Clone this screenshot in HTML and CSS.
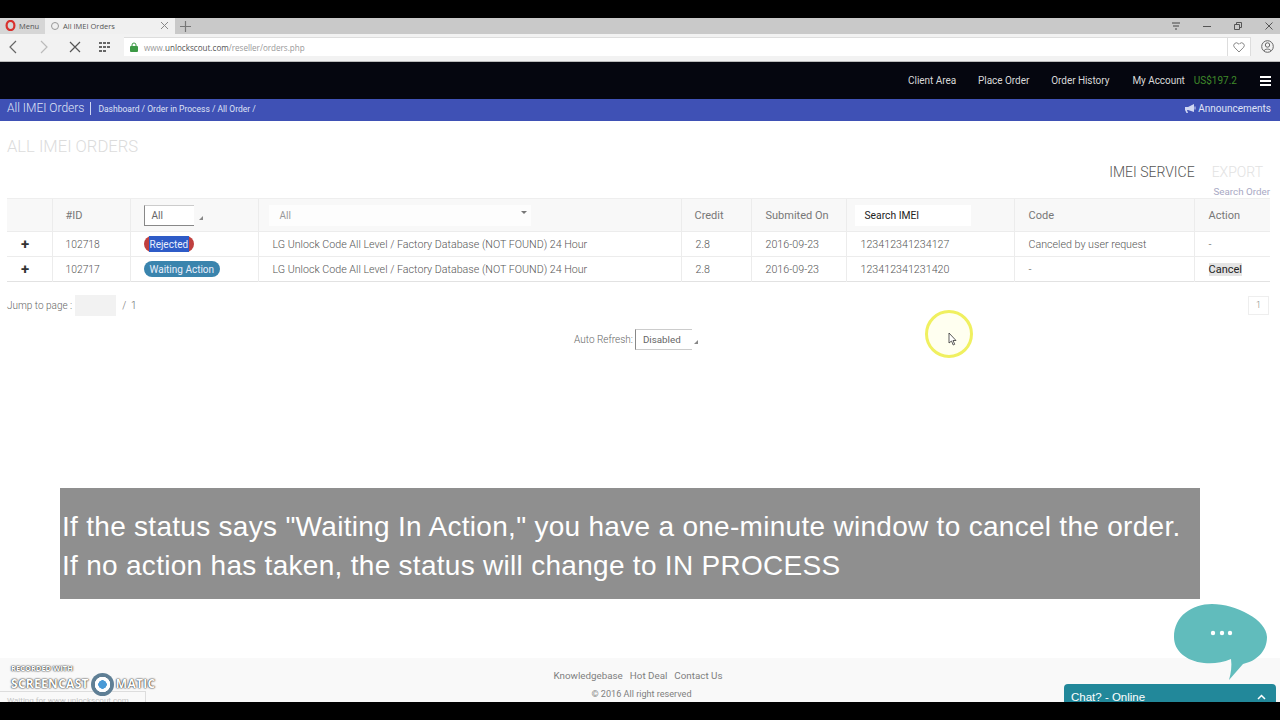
FILE: index.html
```html
<!DOCTYPE html>
<html lang="en">
<head>
    <meta charset="UTF-8">
    <title>All IMEI Orders</title>
    <link rel="stylesheet" href="styles.css">
</head>
<body>
    <div class="letterbox-top"></div>

    <div class="tabbar">
        <div class="menu-btn">
            <svg class="opera" width="11" height="11" viewBox="0 0 11 11"><ellipse cx="5.5" cy="5.5" rx="3.9" ry="4.6" fill="none" stroke="#d9322e" stroke-width="2.2"/></svg>
            <span>Menu</span>
        </div>
        <div class="tab">
            <span class="spinner"></span>
            <span class="tab-title">All IMEI Orders</span>
            <svg width="9" height="9" viewBox="0 0 9 9"><path d="M1 1l7 7M8 1L1 8" stroke="#888" stroke-width="1"/></svg>
        </div>
        <svg class="new-tab" width="11" height="11" viewBox="0 0 11 11"><path d="M5.5 0v11M0 5.5h11" stroke="#777" stroke-width="1.2"/></svg>
        <div class="win-btns">
            <svg width="10" height="10" viewBox="0 0 10 10"><path d="M1 2h8M2 5h6M4 8h2" stroke="#444" stroke-width="1"/></svg>
            <svg width="10" height="10" viewBox="0 0 10 10"><path d="M1 5.5h8" stroke="#555" stroke-width="1"/></svg>
            <svg width="10" height="10" viewBox="0 0 10 10"><path d="M1.5 3.5h5v5h-5zM3.5 3.5v-2h5v5h-2" fill="none" stroke="#555" stroke-width="1"/></svg>
            <svg width="10" height="10" viewBox="0 0 10 10"><path d="M1.5 1.5l7 7M8.5 1.5l-7 7" stroke="#555" stroke-width="1"/></svg>
        </div>
    </div>

    <div class="addressbar">
        <svg width="10" height="14" viewBox="0 0 10 14"><path d="M8 1L2 7l6 6" fill="none" stroke="#666" stroke-width="1.2"/></svg>
        <svg class="dim" width="10" height="14" viewBox="0 0 10 14"><path d="M2 1l6 6-6 6" fill="none" stroke="#bbb" stroke-width="1.2"/></svg>
        <svg width="12" height="12" viewBox="0 0 12 12"><path d="M1 1l10 10M11 1L1 11" stroke="#555" stroke-width="1.2"/></svg>
        <svg width="13" height="12" viewBox="0 0 13 12"><path d="M1 1h3v2H1zM5 1h3v2H5zM9 1h3v2H9zM1 5h3v2H1zM5 5h3v2H5zM9 5h3v2H9zM1 9h3v2H1zM5 9h3v2H5z" fill="#666"/></svg>
        <div class="urlbox">
            <svg width="8" height="10" viewBox="0 0 8 10"><path d="M2 4V3a2 2 0 0 1 4 0v1" fill="none" stroke="#3d9a46"/><rect y="4" width="8" height="6" rx="1" fill="#3d9a46"/></svg>
            <span class="url">www.<b>unlockscout.com</b>/reseller/orders.php</span>
            <div class="heart">
                <svg width="12" height="11" viewBox="0 0 12 11"><path d="M6 10L1.3 5.2a2.7 2.7 0 0 1 3.9-3.7L6 2.300l.8-.8a2.700 2.700 0 0 1 3.900 3.700z" fill="none" stroke="#888"/></svg>
            </div>
        </div>
        <svg class="user" width="13" height="13" viewBox="0 0 13 13"><circle cx="6.500" cy="6.500" r="5.800" fill="none" stroke="#666"/><circle cx="6.500" cy="5" r="2.200" fill="none" stroke="#666"/><path d="M3 11c.5-2.500 6.500-2.500 7 0" fill="none" stroke="#666"/></svg>
    </div>

    <nav class="navbar">
        <a>Client Area</a>
        <a>Place Order</a>
        <a>Order History</a>
        <a>My Account</a>
        <span class="balance">US$197.2</span>
        <div class="burger"><i></i><i></i><i></i></div>
    </nav>

    <div class="crumbbar">
        <span class="crumb-title">All IMEI Orders</span>
        <span class="crumb-path">Dashboard / Order in Process / All Order /</span>
        <span class="announce">
            <svg width="11" height="9" viewBox="0 0 11 9"><path d="M0 3h3l6-3v8L3 6H2l1 3H1.500L0 6z" fill="#cfd6f2"/><path d="M10 2.500v3" stroke="#cfd6f2"/></svg>
            Announcements
        </span>
    </div>

    <main class="content">
        <h1>ALL IMEI ORDERS</h1>
        <div class="tools">
            <span class="tool-service">IMEI SERVICE</span>
            <span class="tool-export">EXPORT</span>
        </div>
        <div class="search-order">Search Order</div>

        <table class="orders">
            <colgroup>
                <col class="c-plus"><col class="c-id"><col class="c-status"><col class="c-service">
                <col class="c-credit"><col class="c-date"><col class="c-imei"><col class="c-code"><col class="c-action">
            </colgroup>
            <thead>
                <tr>
                    <th></th>
                    <th>#ID</th>
                    <th><div class="select">All<span class="arrow"></span></div></th>
                    <th><div class="service-select">All<span class="caret"></span></div></th>
                    <th>Credit</th>
                    <th>Submited On</th>
                    <th><div class="imei-search">Search IMEI</div></th>
                    <th>Code</th>
                    <th>Action</th>
                </tr>
            </thead>
            <tbody>
                <tr>
                    <td class="plus">+</td>
                    <td>102718</td>
                    <td><span class="badge rejected"><span>Rejected</span></span></td>
                    <td>LG Unlock Code All Level / Factory Database (NOT FOUND) 24 Hour</td>
                    <td>2.8</td>
                    <td>2016-09-23</td>
                    <td>123412341234127</td>
                    <td>Canceled by user request</td>
                    <td>-</td>
                </tr>
                <tr>
                    <td class="plus">+</td>
                    <td>102717</td>
                    <td><span class="badge waiting">Waiting Action</span></td>
                    <td>LG Unlock Code All Level / Factory Database (NOT FOUND) 24 Hour</td>
                    <td>2.8</td>
                    <td>2016-09-23</td>
                    <td>123412341231420</td>
                    <td>-</td>
                    <td><span class="cancel">Cancel</span></td>
                </tr>
            </tbody>
        </table>

        <div class="pager">
            <span>Jump to page :</span>
            <span class="page-input"></span>
            <span>/ &nbsp;1</span>
            <span class="page-num">1</span>
        </div>

        <div class="refresh">
            <span>Auto Refresh:</span>
            <div class="select refresh-select">Disabled<span class="arrow"></span></div>
        </div>
    </main>

    <footer class="footer">
        <div class="foot-links"><a>Knowledgebase</a><a>Hot Deal</a><a>Contact Us</a></div>
        <div class="copy">© 2016 All right reserved</div>
    </footer>

    <div class="letterbox-bottom"></div>

    <!-- things lying on top of the recording -->
    <div class="caption">If the status says "Waiting In Action," you have a one-minute window to cancel the order.<br>If no action has taken, the status will change to IN PROCESS</div>

    <div class="cursor-ring">
        <svg width="9" height="14" viewBox="0 0 9 14"><path d="M1 1v10l2.500-2 1.700 4 1.500-.7-1.700-3.800H8z" fill="#fff" stroke="#333" stroke-width=".8"/></svg>
    </div>

    <svg class="chat-bubble" width="94" height="76" viewBox="0 0 94 76">
        <path d="M0 33C0 12 18 0 38 0c24 0 55 16 55 33 0 15-11 24-24 27L55 76c2-7 3-14 2-21-9 4-19 5-27 4C12 57 0 47 0 33z" fill="#61bcbc"/>
        <circle cx="39" cy="29" r="2.200" fill="#fff"/><circle cx="48" cy="29" r="2.200" fill="#fff"/><circle cx="56" cy="29" r="2.200" fill="#fff"/>
    </svg>
    <div class="chat-tab">
        <span>Chat? - Online</span>
        <svg width="9" height="6" viewBox="0 0 9 6"><path d="M1 5l3.500-3.500L8 5" fill="none" stroke="#fff" stroke-width="1.500"/></svg>
    </div>

    <div class="status-tip">Waiting for www.unlockscout.com...</div>
    <div class="watermark">
        <div class="wm-small">RECORDED WITH</div>
        <div class="wm-big">SCREENCAST<span class="wm-dot"></span>MATIC</div>
    </div>
</body>
</html>
```

FILE: styles.css
```css
html, body {
    margin: 0;
    padding: 0;
    height: 100%;
    overflow: hidden;
}
body {
    position: relative;
    display: flex;
    flex-direction: column;
    width: 1280px;
    height: 720px;
    background-color: #fff;
    font-family: Roboto, "Liberation Sans", sans-serif;
    font-size: 10.500px;
    color: #666;
}
svg {
    display: block;
    flex: none;
}
.letterbox-top {
    height: 18px;
    background-color: #000;
}
.letterbox-bottom {
    height: 18px;
    background-color: #000;
}

/* browser chrome */
.tabbar {
    display: flex;
    align-items: center;
    height: 16px;
    background-color: #c9c9c9;
    flex: none;
}
.menu-btn {
    display: flex;
    align-items: center;
    gap: 3px;
    width: 45px;
    height: 16px;
    padding: 0 0 1px 5px;
    box-sizing: border-box;
    background-color: #d6d6d6;
    font-family: "Open Sans", sans-serif;
    font-size: 7.500px;
    color: #555;
}
.tab {
    display: flex;
    align-items: center;
    width: 130px;
    height: 16px;
    padding: 0 6px 1px 6px;
    box-sizing: border-box;
    background-color: #f0f0f0;
    font-family: "Open Sans", sans-serif;
    font-size: 7.500px;
    color: #555;
}
.spinner {
    width: 6px;
    height: 6px;
    border: 1.500px solid #999;
    border-radius: 50%;
    margin-right: 4px;
}
.tab-title {
    flex: 1;
}
.new-tab {
    margin-left: 5px;
}
.win-btns {
    display: flex;
    gap: 21px;
    margin-left: auto;
    padding-right: 6px;
    align-items: center;
}
.addressbar {
    display: flex;
    align-items: center;
    height: 28px;
    padding: 0 6px 2px 8px;
    box-sizing: border-box;
    background-color: #f2f2f2;
    border-bottom: 1px solid #bbb;
    flex: none;
}
.addressbar > svg:nth-child(2) {
    margin-left: 21px;
}
.addressbar > svg:nth-child(3) {
    margin-left: 20px;
}
.addressbar > svg:nth-child(4) {
    margin-left: 17px;
}
.urlbox {
    display: flex;
    align-items: center;
    gap: 6px;
    flex: 1;
    height: 19px;
    margin-left: 13px;
    padding-left: 6px;
    background-color: #fff;
    border-top: 1px solid #ddd;
    box-sizing: border-box;
}
.url {
    flex: 1;
    font-family: "Open Sans", sans-serif;
    font-size: 8.100px;
    color: #999;
}
.url b {
    font-weight: 400;
    color: #555;
}
.heart {
    display: flex;
    align-items: center;
    justify-content: center;
    width: 22px;
    height: 18px;
    border-left: 1px solid #ddd;
    border-right: 1px solid #ddd;
}
.user {
    margin-left: 10px;
}

/* site header */
.navbar {
    display: flex;
    align-items: center;
    height: 37px;
    padding-right: 9px;
    background-color: #05060f;
    color: #d8d8d8;
    flex: none;
}
.navbar a:first-child {
    margin-left: auto;
}
.navbar a {
    margin-right: 22px;
    font-size: 10px;
    letter-spacing: -.05px;
}
.navbar a:nth-child(3) {
    margin-right: 23px;
}
.navbar a:nth-child(4) {
    margin-right: 9px;
}
.balance {
    color: #3f8a2a;
    font-size: 10px;
    margin-right: 23px;
}
.burger {
    display: flex;
    flex-direction: column;
    gap: 2px;
}
.burger i {
    display: block;
    width: 11px;
    height: 2px;
    background-color: #fff;
}
.crumbbar {
    display: flex;
    align-items: center;
    height: 22px;
    padding: 0 9px 3px 7px;
    box-sizing: border-box;
    background-color: #3f51b5;
    color: #dfe3f6;
    flex: none;
}
.crumb-title {
    font-size: 12px;
    font-weight: 300;
    padding-right: 6px;
    border-right: 1px solid #cfd6f2;
    line-height: 13px;
}
.crumb-path {
    margin-left: 7px;
    font-size: 8.500px;
}
.announce {
    display: flex;
    align-items: center;
    gap: 2px;
    margin-left: auto;
    font-size: 10px;
}

/* orders page */
.content {
    flex: 1;
    padding: 17px 10px 0 7px;
    min-height: 0;
}
h1 {
    margin: 0;
    font-size: 16.600px;
    line-height: 18px;
    font-weight: 300;
    color: #dcdcdc;
}
.tools {
    display: flex;
    justify-content: flex-end;
    align-items: center;
    gap: 17px;
    height: 18px;
    margin-top: 7px;
    padding-right: 7px;
    font-size: 14px;
    font-weight: 300;
}
.tool-service {
    color: #555;
}
.tool-export {
    color: #e2e2e2;
}
.search-order {
    height: 11px;
    margin-top: 5px;
    text-align: right;
    font-size: 9.800px;
    line-height: 11px;
    color: #a9a9c4;
}
.orders {
    width: 1263px;
    margin-top: 1px;
    table-layout: fixed;
    border-collapse: collapse;
    border-bottom: 1px solid #e2e2e2;
}
.c-plus { width: 45px; }
.c-id { width: 78px; }
.c-status { width: 128px; }
.c-service { width: 423px; }
.c-credit { width: 70px; }
.c-date { width: 95px; }
.c-imei { width: 168px; }
.c-code { width: 180px; }
.c-action { width: 76px; }
.orders th, .orders td {
    padding: 0 0 0 14px;
    border-left: 1px solid #ececec;
    text-align: left;
    white-space: nowrap;
}
.orders th:first-child, .orders td:first-child {
    border-left: 0;
}
.orders th:nth-child(2), .orders td:nth-child(2), .orders th:nth-child(3), .orders td:nth-child(3), .orders th:nth-child(5) {
    padding-left: 13px;
}
.orders th {
    height: 32px;
    background-color: #f8f8f8;
    border-top: 1px solid #eee;
    font-weight: 400;
    color: #777;
    font-size: 11px;
}
.orders td {
    height: 24px;
    border-top: 1px solid #ececec;
    font-size: 10.700px;
    font-weight: 300;
    color: #555;
}
.orders td:nth-child(2) {
    font-size: 10.300px;
}
.orders td.plus {
    padding-left: 14px;
    font-size: 15px;
    font-weight: 700;
    color: #333;
}
.select {
    position: relative;
    display: flex;
    align-items: center;
    width: 50px;
    height: 21px;
    padding-left: 7px;
    box-sizing: border-box;
    background-color: #fff;
    border-left: 1px solid #888;
    border-top: 1px solid #ccc;
    border-bottom: 1px solid #888;
    font-size: 10px;
    color: #666;
}
.arrow {
    position: absolute;
    right: -9px;
    bottom: 5px;
    width: 0;
    height: 0;
    border-left: 4px solid transparent;
    border-bottom: 4px solid #888;
}
.service-select {
    position: relative;
    display: flex;
    align-items: center;
    width: 262px;
    height: 21px;
    margin-left: -4px;
    padding-left: 11px;
    box-sizing: border-box;
    background-color: #fdfdfd;
    color: #999;
    font-size: 10px;
}
.caret {
    position: absolute;
    right: 4px;
    top: 6px;
    width: 0;
    height: 0;
    border-left: 3px solid transparent;
    border-right: 3px solid transparent;
    border-top: 3px solid #777;
}
.imei-search {
    width: 116px;
    height: 21px;
    margin-left: -6px;
    padding-left: 10px;
    box-sizing: border-box;
    background-color: #fff;
    color: #222;
    font-size: 10.300px;
    line-height: 21px;
}
.badge {
    display: inline-block;
    height: 16px;
    padding: 0 6px;
    border-radius: 8px;
    color: #e8eefc;
    font-size: 10px;
    font-weight: 400;
    line-height: 17px;
    box-sizing: border-box;
    vertical-align: middle;
}
.rejected {
    background-color: #c0403f;
}
.rejected span {
    display: inline-block;
    height: 16px;
    margin: 0 -1px;
    padding: 0 1px;
    background-color: #2e5bc7;
}
.waiting {
    background-color: #3a84ad;
}
.cancel {
    background-color: #e4e4e4;
    color: #222;
    font-size: 11px;
    font-weight: 400;
}
.pager {
    display: flex;
    align-items: center;
    gap: 3px;
    height: 22px;
    margin-top: 12px;
    font-size: 10px;
    font-weight: 300;
    color: #666;
}
.page-input {
    width: 41px;
    height: 21px;
    margin-right: 3px;
    background-color: #f2f2f2;
}
.page-num {
    margin-left: auto;
    width: 21px;
    height: 19px;
    margin-right: 1px;
    border: 1px solid #eee;
    box-sizing: border-box;
    text-align: center;
    line-height: 17px;
    font-size: 9px;
    color: #888;
}
.refresh {
    display: flex;
    align-items: center;
    justify-content: center;
    gap: 2px;
    margin-top: 13px;
    padding-right: 11px;
    font-size: 10px;
    font-weight: 300;
    color: #666;
}
.refresh-select {
    width: 57px;
    font-size: 9.800px;
    font-weight: 400;
    border-top-color: #ccc;
    border-bottom-color: #ccc;
}
.refresh-select .arrow {
    right: -6px;
}
.footer {
    height: 44px;
    padding-top: 12px;
    box-sizing: border-box;
    background-color: #f9f9f9;
    text-align: center;
    flex: none;
}
.foot-links {
    display: flex;
    justify-content: center;
    gap: 7px;
    padding-right: 4px;
    font-size: 9.800px;
    line-height: 12px;
    color: #808080;
}
.copy {
    margin-top: 7px;
    padding-left: 3px;
    font-size: 9.100px;
    line-height: 11px;
    color: #808080;
}

/* overlays */
.caption {
    position: absolute;
    left: 60px;
    top: 488px;
    width: 1140px;
    height: 111px;
    padding: 19px 0 0 2px;
    box-sizing: border-box;
    background-color: #8f8f8f;
    font-family: "Liberation Sans", sans-serif;
    font-size: 28px;
    letter-spacing: .29px;
    line-height: 39px;
    color: #fff;
    white-space: nowrap;
}
.cursor-ring {
    position: absolute;
    left: 925px;
    top: 310px;
    width: 48px;
    height: 48px;
    box-sizing: border-box;
    border: 3px solid #f0f060;
    border-radius: 50%;
    background-color: rgba(255, 255, 225, .5);
}
.cursor-ring svg {
    margin: 19px 0 0 20px;
}
.chat-bubble {
    position: absolute;
    left: 1174px;
    top: 604px;
}
.chat-tab {
    position: absolute;
    left: 1064px;
    top: 684px;
    display: flex;
    align-items: center;
    justify-content: space-between;
    width: 212px;
    height: 18px;
    padding: 7px 10px 0 7px;
    box-sizing: border-box;
    border-radius: 4px 4px 0 0;
    background-color: #22889a;
    font-family: "Liberation Sans", sans-serif;
    font-size: 11.500px;
    color: #fff;
    overflow: hidden;
}
.status-tip {
    position: absolute;
    left: 0;
    top: 691px;
    width: 146px;
    height: 11px;
    padding-left: 7px;
    box-sizing: border-box;
    border-top: 1px solid #ddd;
    border-right: 1px solid #ddd;
    font-size: 8px;
    line-height: 17px;
    color: #c4c4c4;
    overflow: hidden;
    white-space: nowrap;
}
.watermark {
    position: absolute;
    left: 11px;
    top: 663px;
    font-family: "Open Sans", sans-serif;
    font-weight: 700;
    color: #fff;
    text-shadow: 0 0 2px #222, 0 0 1px #222;
}
.wm-small {
    font-size: 7.500px;
    line-height: 10px;
}
.wm-big {
    display: flex;
    align-items: center;
    height: 22px;
    font-size: 12px;
    line-height: 22px;
    letter-spacing: .3px;
}
.wm-dot {
    flex: none;
    width: 23px;
    height: 23px;
    margin: 0 2px;
    border-radius: 50%;
    background: radial-gradient(circle, #4a9ad6 0 4px, #fff 4.500px 7.500px, #5f7f95 8px 11.500px);
}
```
